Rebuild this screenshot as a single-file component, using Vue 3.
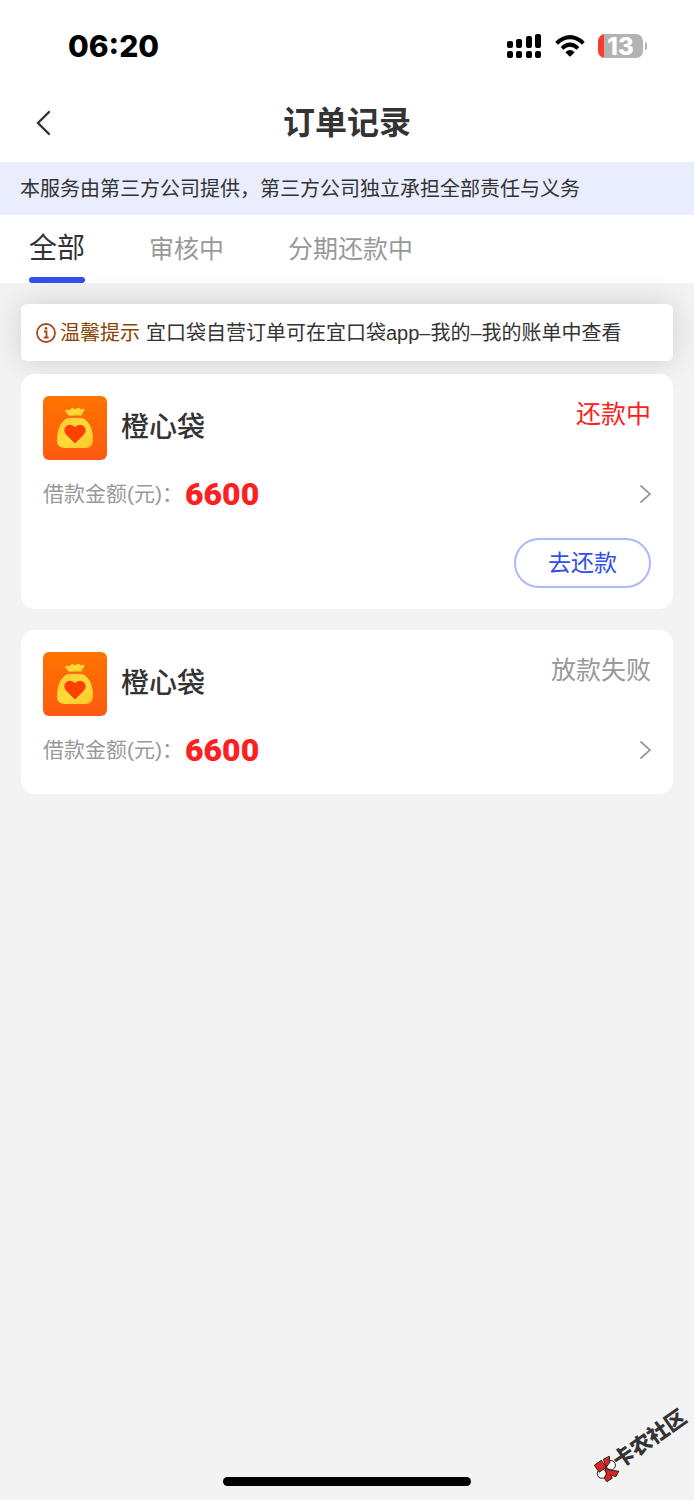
<script setup>
import { ref } from 'vue'

const tabs = ['全部', '审核中', '分期还款中']
const active = ref(0)
const orders = [
  { id: 1, name: '橙心袋', amount: 6600, status: '还款中', due: true },
  { id: 2, name: '橙心袋', amount: 6600, status: '放款失败', due: false },
]
</script>

<template>
  <div class="page">
    <div class="statusbar">
      <span class="time">06:20</span>
      <div class="indicators">
        <svg class="signal" width="36" height="26" viewBox="0 0 36 26" aria-hidden="true">
          <rect x="1" y="8" width="6" height="7" rx="2" />
          <rect x="10" y="6" width="6" height="9" rx="2" />
          <rect x="20" y="3" width="6" height="12" rx="2" />
          <rect x="29" y="1" width="6" height="14" rx="2" />
          <rect x="1" y="18" width="6" height="7" rx="2" />
          <rect x="10" y="18" width="6" height="7" rx="2" />
          <rect x="20" y="18" width="6" height="7" rx="2" />
          <rect x="29" y="18" width="6" height="7" rx="2" />
        </svg>
        <svg class="wifi" width="30" height="22" viewBox="0 0 30 22" aria-hidden="true">
          <path d="M1.6 8.2 Q15 -3.8 28.4 8.2" />
          <path d="M7 13.4 Q15 6 23 13.4" />
          <path class="dot" d="M10.4 17.2 Q15 13 19.6 17.2 L15.7 21.2 Q15 21.8 14.3 21.2 Z" />
        </svg>
        <div class="battery">
          <div class="cell">13</div>
          <div class="nub"></div>
        </div>
      </div>
    </div>

    <header class="header">
      <button class="back" type="button" aria-label="返回">
        <svg width="16" height="26" viewBox="0 0 16 26" aria-hidden="true">
          <path d="M14 2 L3 13 L14 24" />
        </svg>
      </button>
      <h1>订单记录</h1>
    </header>

    <p class="banner">本服务由第三方公司提供，第三方公司独立承担全部责任与义务</p>

    <nav class="tabs">
      <button
        v-for="(tab, i) in tabs"
        :key="tab"
        type="button"
        class="tab"
        :class="{ active: active === i }"
        @click="active = i"
      >{{ tab }}</button>
    </nav>

    <main class="content">
      <div class="notice">
        <svg width="20" height="20" viewBox="0 0 20 20" aria-hidden="true">
          <circle cx="10" cy="10" r="9" />
          <path d="M8 8.5 H10.5 V14.3 M7.8 14.5 H12.6" />
          <circle class="dot" cx="10" cy="5.4" r="1.4" />
        </svg>
        <strong>温馨提示</strong>
        <span>宜口袋自营订单可在宜口袋app–我的–我的账单中查看</span>
      </div>

      <article v-for="order in orders" :key="order.id" class="card">
        <div class="top">
          <svg class="logo" width="64" height="64" viewBox="0 0 64 64" aria-hidden="true">
            <defs>
              <linearGradient :id="'bg' + order.id" x1="0" y1="0" x2="0" y2="1">
                <stop offset="0" stop-color="#ff7400" />
                <stop offset="1" stop-color="#ff5911" />
              </linearGradient>
              <linearGradient :id="'bag' + order.id" x1="0" y1="0" x2="1" y2="1">
                <stop offset="0" stop-color="#ffc52e" />
                <stop offset="0.5" stop-color="#ffdc38" />
                <stop offset="1" stop-color="#ffc52c" />
              </linearGradient>
            </defs>
            <rect width="64" height="64" rx="6" :fill="'url(#bg' + order.id + ')'" />
            <path
              d="M25 19.5 Q25 17 22.2 15.6 Q22 13.4 24.5 13.6 Q26.6 14.8 28 12.8 Q29.3 10.8 31 12.4 Q32 13.8 33.4 12.6 Q35.5 10.4 36.8 12.4 Q38 14.2 40.3 12.6 Q42.2 13.2 40.8 15.6 Q38.8 17 38.8 19.5 Z"
              :fill="'url(#bag' + order.id + ')'"
            />
            <path
              d="M24.5 22 H39.5 Q50 27.5 50 44 Q50 52 42 52 H22 Q14 52 14 44 Q14 27.5 24.5 22 Z"
              :fill="'url(#bag' + order.id + ')'"
            />
            <path
              d="M32 47.5 L23.5 39 Q19.8 35 22.4 31 Q26.8 26.4 32 31 Q37.2 26.4 41.6 31 Q44.2 35 40.5 39 Z"
              fill="#ff4100"
            />
          </svg>
          <h2>{{ order.name }}</h2>
          <span class="status" :class="{ due: order.due }">{{ order.status }}</span>
        </div>
        <a class="detail" href="#">
          <span class="label">借款金额(元)：</span>
          <span class="amount">{{ order.amount }}</span>
          <svg class="arrow" width="12" height="20" viewBox="0 0 12 20" aria-hidden="true">
            <path d="M2 2 L11 10 L2 18" />
          </svg>
        </a>
        <div v-if="order.due" class="actions">
          <button class="repay" type="button">去还款</button>
        </div>
      </article>
    </main>

    <div class="watermark">
      <svg width="27" height="28" viewBox="0 0 27 28" aria-hidden="true">
        <g stroke="#222" stroke-width="1">
          <circle cx="17.5" cy="10" r="4.6" fill="#fff" />
          <circle cx="8.5" cy="18.5" r="4.6" fill="#fff" />
          <path d="M1 10 L8 5 L13 12 L6 17 Z" fill="#e3231b" />
          <path d="M10 4 L16 1 L16.5 7 L13 12 Z" fill="#e3231b" />
          <path d="M12 13 L17 15 L25.5 16 L22.5 21.5 L17 19.5 L19 23 L13.5 26.5 L11 23 L13 19 Z" fill="#e3231b" />
        </g>
      </svg>
      <span>卡农社区</span>
    </div>
    <div class="home"></div>
  </div>
</template>

<style>
body {
  background: #f3f3f3;
}
</style>

<style scoped>
.page {
  position: relative;
  min-height: 100vh;
  overflow: hidden;
  background: #f3f3f3;
  color: #333;
  font-family: "Liberation Sans", "Noto Sans CJK SC", sans-serif;
}
.page * {
  box-sizing: border-box;
}
h1, h2, p {
  margin: 0;
}
button {
  border: 0;
  padding: 0;
  background: none;
  font-family: inherit;
  color: inherit;
  cursor: pointer;
}
.statusbar {
  display: flex;
  justify-content: space-between;
  align-items: center;
  height: 84px;
  padding: 8px 47px 0 68px;
  background: #fff;
  color: #000;
}
.time {
  font: 800 30px/36px Inter, sans-serif;
}
.indicators {
  display: flex;
  align-items: center;
  gap: 13px;
}
.wifi path {
  fill: none;
  stroke: #000;
  stroke-width: 4;
}
.wifi .dot {
  fill: #000;
  stroke: none;
}
.battery {
  display: flex;
  align-items: center;
  gap: 2px;
}
.cell {
  width: 45px;
  height: 24px;
  border-radius: 7px;
  background: linear-gradient(90deg, #ff3b30 6px, #b3b3b3 6px);
  color: #fff;
  font: 800 24px/25px Inter, sans-serif;
  text-align: center;
}
.nub {
  width: 2px;
  height: 8px;
  border-radius: 0 2px 2px 0;
  background: #b3b3b3;
}
.header {
  position: relative;
  display: flex;
  justify-content: center;
  align-items: center;
  height: 78px;
  background: #fff;
}
.header h1 {
  font-size: 32px;
  line-height: 50px;
  font-weight: 700;
}
.back {
  position: absolute;
  left: 35px;
  display: flex;
}
.back path {
  fill: none;
  stroke: #333;
  stroke-width: 2.4;
  stroke-linecap: round;
}
.banner {
  padding: 13px 20px 12px;
  background: #eaedfd;
  font-size: 20px;
  line-height: 28px;
  white-space: nowrap;
}
.tabs {
  display: flex;
  gap: 64px;
  height: 68px;
  padding: 0 29px;
  background: #fff;
}
.tab {
  position: relative;
  color: #999;
  font-size: 25px;
  line-height: 68px;
}
.tab.active {
  color: #333;
  font-size: 28px;
}
.tab.active::after {
  content: "";
  position: absolute;
  inset: auto 0 0;
  height: 6px;
  border-radius: 3px;
  background: #3350ea;
}
.content {
  padding: 21px;
}
.notice {
  display: flex;
  align-items: center;
  height: 57px;
  margin-bottom: 13px;
  padding: 0 15px;
  border-radius: 6px;
  background: #fff;
  box-shadow: 0 0 32px rgba(0, 0, 0, 0.15);
  font-size: 20px;
  line-height: 28px;
  white-space: nowrap;
}
.notice svg {
  margin-right: 4px;
  fill: none;
  stroke: #a34b23;
  stroke-width: 1.8;
}
.notice .dot {
  fill: #a34b23;
  stroke: none;
}
.notice strong {
  margin-right: 6px;
  color: #8a4200;
  font-weight: 400;
}
.card {
  position: relative;
  margin-bottom: 21px;
  padding: 22px 22px 21px;
  border-radius: 14px;
  background: #fff;
}
.top {
  display: flex;
  align-items: center;
  height: 64px;
}
.top h2 {
  margin-left: 14px;
  font-size: 28px;
  line-height: 42px;
  font-weight: 500;
}
.status {
  align-self: flex-start;
  margin-left: auto;
  color: #999;
  font-size: 25px;
  line-height: 36px;
}
.status.due {
  color: #fe2020;
}
.detail {
  display: flex;
  align-items: center;
  height: 36px;
  margin-top: 16px;
  margin-bottom: 5px;
  color: #999;
  text-decoration: none;
}
.label {
  margin-right: 2px;
  font-size: 21px;
  line-height: 32px;
}
.amount {
  color: #fe2020;
  font: 900 32px/36px Roboto, sans-serif;
}
.arrow {
  margin-left: auto;
  fill: none;
  stroke: #999;
  stroke-width: 1.8;
  stroke-linecap: round;
}
.actions {
  display: flex;
  justify-content: flex-end;
  margin-top: 26px;
}
.repay {
  width: 137px;
  height: 50px;
  border: 2px solid #adbaf8;
  border-radius: 25px;
  color: #3350ea;
  font-size: 23px;
  line-height: 44px;
}
.watermark {
  position: absolute;
  right: 0;
  bottom: 40px;
  display: flex;
  align-items: center;
  color: #333;
  font-size: 21px;
  line-height: 28px;
  font-weight: 900;
  transform: rotate(-35deg);
}
.watermark svg {
  margin-right: -3px;
  transform: rotate(35deg);
}
.home {
  position: absolute;
  left: 50%;
  bottom: 14px;
  width: 248px;
  height: 9px;
  margin-left: -124px;
  border-radius: 5px;
  background: #000;
}
</style>
